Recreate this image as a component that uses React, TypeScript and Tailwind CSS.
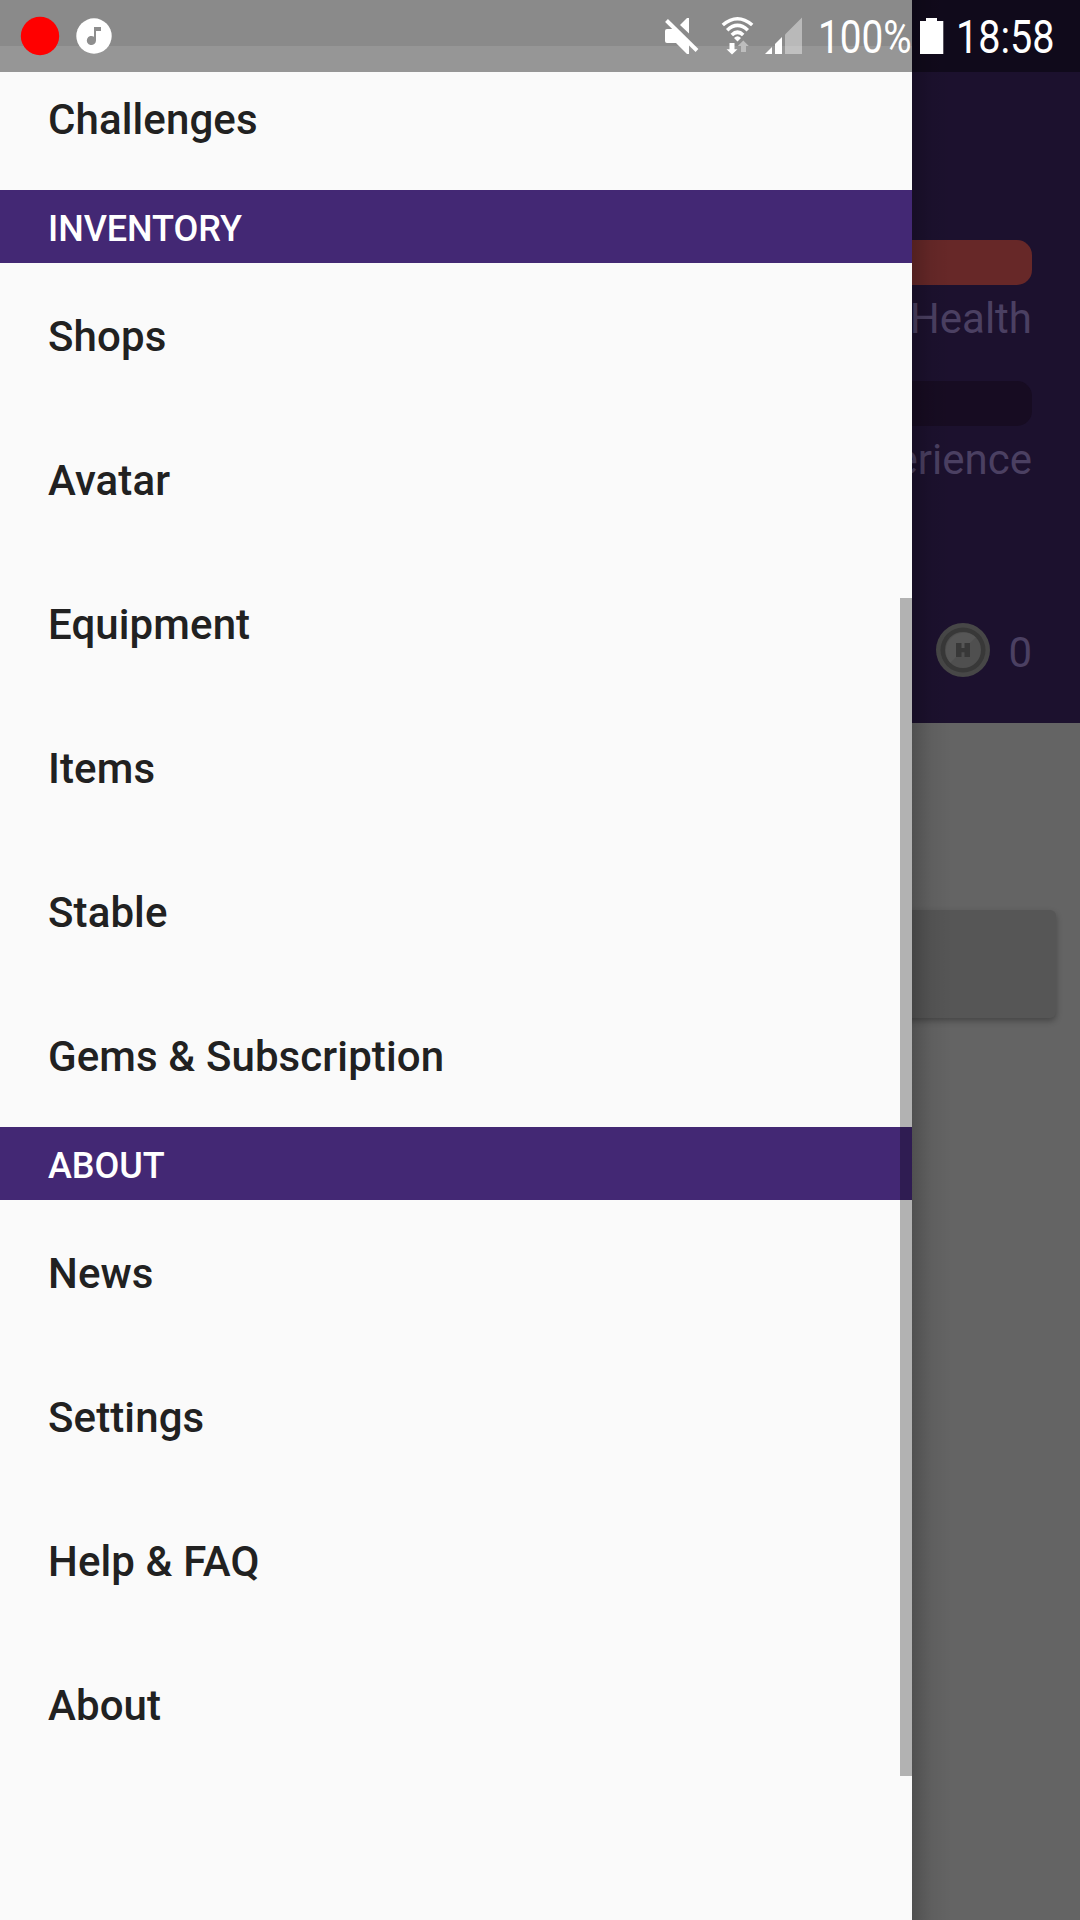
import React from 'react';

type Section = { title?: string; items: string[] };

const sections: Section[] = [
  { items: ['Challenges'] },
  { title: 'INVENTORY', items: ['Shops', 'Avatar', 'Equipment', 'Items', 'Stable', 'Gems & Subscription'] },
  { title: 'ABOUT', items: ['News', 'Settings', 'Help & FAQ', 'About'] },
];

function Stat({ label, color }: { label: string; color: string }) {
  return (
    <div className="h-[141px]">
      <div className={`h-[45px] rounded-[15px] ${color}`} />
      <div className="text-right text-[42px] leading-[67px] text-[#4b4062]">{label}</div>
    </div>
  );
}

function Coin() {
  return (
    <svg className="h-[54px] w-[54px]" viewBox="0 0 54 54">
      <circle cx="27" cy="27" r="27" fill="#474747" />
      <circle cx="27" cy="27" r="22.5" fill="#383838" />
      <circle cx="27" cy="27" r="18" fill="#4f4f4f" />
      <path d="M14.3 39.7A18 18 0 0 1 39.7 14.3Z" fill="#565656" />
      <path d="M20 20H25.500V25H28.500V20H34V34H28.500V29.300H25.500V34H20Z" fill="#383838" />
    </svg>
  );
}

function Page() {
  return (
    <main className="flex h-full flex-col bg-[#646464]">
      <header className="h-[723px] bg-[#1c112e] pt-[240px] pr-12 pl-[400px]">
        <Stat label="Health" color="bg-[#672828]" />
        <Stat label="Experience" color="bg-[#170c22]" />
        <div className="mt-[101px] flex items-center justify-end gap-[18px]">
          <Coin />
          <span className="pt-[5px] text-[42px] leading-[49px] text-[#4b4062]">0</span>
        </div>
      </header>
      <div className="mx-6 mt-[187px] h-[108px] rounded-[6px] bg-[#565656] shadow-[0_3px_6px_rgba(0,0,0,0.3)]" />
    </main>
  );
}

function Drawer() {
  return (
    <nav className="absolute inset-y-0 left-0 w-[912px] bg-[#fafafa]">
      <div className="h-[46px] bg-[#e6e6e6]" />
      {sections.map((s) => (
        <section key={s.items[0]}>
          {s.title && (
            <h2 className="flex h-[73px] items-center bg-[#432874] pt-[4px] pl-12 text-[36px] font-medium tracking-[-0.05px] text-white">
              {s.title}
            </h2>
          )}
          {s.items.map((i) => (
            <div
              key={i}
              className="flex h-36 items-center pt-[3px] pl-12 text-[42px] font-medium tracking-[0.11px] text-[#212121]"
            >
              {i}
            </div>
          ))}
        </section>
      ))}
      <div className="absolute top-[598px] right-0 h-[1178px] w-3 bg-black/[0.285]" />
      <div className="absolute inset-y-0 left-full w-10 bg-linear-to-r from-black/20 via-black/5 via-50% to-transparent" />
    </nav>
  );
}

function StatusBar() {
  return (
    <div className="absolute inset-x-0 top-0 flex h-[72px] items-start bg-black/40 text-white">
      <svg className="h-[72px] w-[130px] shrink-0" viewBox="0 0 130 72">
        <circle cx="40" cy="36" r="19.200" fill="#f00" />
        <circle cx="94" cy="36" r="17.700" fill="#fff" />
        <path d="M94 27h7v4h-5v9.500a4.600 4.600 0 1 1-2-3.800Z" fill="#8e8e8e" />
      </svg>
      <svg className="ml-[530px] h-[72px] w-[150px] shrink-0" viewBox="660 0 150 72">
        <path d="M667 29H676L689 42V54H687L676 43H667Q665 43 665 41V31Q665 29 667 29Z" fill="#fff" />
        <path d="M680 25L687 18H689V33.500Z" fill="#fff" />
        <path d="M666.500 20.500L697 50.500" stroke="#fff" strokeWidth="4" />
        <g fill="none" stroke="#fff" strokeWidth="3.600">
          <path d="M722.800 25q14.700-12.500 29.400 0" />
          <path d="M727.200 30.200q10.300-9.500 20.600 0" />
          <path d="M731.800 35q5.700-5.500 11.400 0" />
        </g>
        <path d="M734 38q3.500-3.500 7 0L737.500 41.500Z" fill="#fff" />
        <path d="M729.500 43H734.500V49.200H737.500L732 54.500L726.500 49.200H729.500Z" fill="#fff" />
        <path d="M741 52V46H737.800L743.300 40.500L748.800 46H746V52Z" fill="#bdbdbd" />
        <path d="M765 54H772V47Z" fill="#fff" />
        <path d="M775 54H782V37L775 44Z" fill="#fff" />
        <path d="M785 54H802V17.500L785 34.500Z" fill="#fff" fillOpacity=".4" />
      </svg>
      <div className="ml-2 w-[94px] pt-[10px] text-[46px] leading-[54px]">
        <span className="block w-max origin-left scale-x-[0.842]">100%</span>
      </div>
      <svg className="ml-2 h-[72px] w-[24px] shrink-0" viewBox="920 0 24 72">
        <path d="M926 18h11v3h6.300v33H920V21h6Z" fill="#fff" />
      </svg>
      <div className="ml-3 pt-[10px] text-[46px] leading-[54px]">
        <span className="block w-max origin-left scale-x-[0.86]">18:58</span>
      </div>
    </div>
  );
}

export default function App() {
  return (
    <div className="relative h-[1920px] w-[1080px] overflow-hidden font-['Roboto',sans-serif]">
      <Page />
      <Drawer />
      <StatusBar />
    </div>
  );
}
